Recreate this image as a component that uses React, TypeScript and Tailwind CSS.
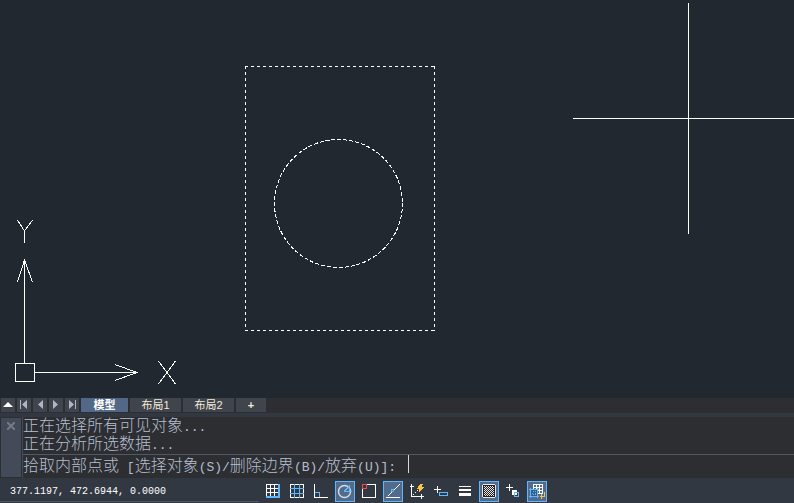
import { useState } from 'react';
import type { ReactNode } from 'react';
import clsx from 'clsx';

interface StatusToggle {
  id: string;
  label: string;
  icon: ReactNode;
}

const BLUE = '#5db8ff';

const statusToggles: StatusToggle[] = [
  {
    id: 'snap',
    label: '捕捉模式',
    icon: (
      <>
        <path d="M3 3.5h12M3 7.5h12M3 11.5h12M3.5 3v13M7.5 3v12M11.5 3v12" stroke="#fff" />
        <path d="M15 3h2v14H3v-2h12z" fill={BLUE} />
      </>
    ),
  },
  {
    id: 'grid',
    label: '栅格显示',
    icon: (
      <>
        <path d="M3.5 3.5h13v13h-13z" stroke="#fff" />
        <path d="M7.5 3v14M12.5 3v14M3 7.5h14M3 12.5h14" stroke={BLUE} />
      </>
    ),
  },
  {
    id: 'ortho',
    label: '正交模式',
    icon: (
      <>
        <path d="M4 11.5h4.5V16" stroke={BLUE} />
        <path d="M3.5 3v13.5H17" stroke="#fff" />
      </>
    ),
  },
  {
    id: 'polar',
    label: '极轴追踪',
    icon: (
      <>
        <circle cx="9.5" cy="10.5" r="6" stroke="#d8dde4" strokeWidth="1.4" shapeRendering="auto" />
        <path d="M9 10.5h8M9 10.5l6-6M14.5 6.5v4" stroke={BLUE} />
      </>
    ),
  },
  {
    id: 'osnap',
    label: '对象捕捉',
    icon: (
      <>
        <path d="M8 3.5h8.5v13h-13V8" stroke="#fff" />
        <path d="M3.5 3.5h4v4h-4z" stroke="#ef4b4b" />
      </>
    ),
  },
  {
    id: 'otrack',
    label: '对象捕捉追踪',
    icon: (
      <>
        <path d="M3 16.5h14M4.5 15.5l12-12" stroke="#fff" />
        <path d="M8.5 8.5h2v2h-2z" stroke={BLUE} fill="#56708f" />
      </>
    ),
  },
  {
    id: 'ducs',
    label: '动态 UCS',
    icon: (
      <>
        <path d="M4.5 3v12.5H17M3 5.5h4M14.5 13v5" stroke="#fff" />
        <path d="M5.5 14.5l6-6" stroke="#fff" strokeDasharray="2 1" />
        <path d="M13 3h3l-1 3h2l-5 5v-3h-2z" fill="#fdc342" />
      </>
    ),
  },
  {
    id: 'dyn',
    label: '动态输入',
    icon: (
      <>
        <path d="M3 8.5h7M6.5 5v7" stroke="#fff" />
        <path d="M8.5 11.5h8v3h-8z" stroke={BLUE} />
      </>
    ),
  },
  {
    id: 'lwt',
    label: '线宽',
    icon: <path d="M4 5h12v1H4zM4 8h12v2H4zM4 12h12v3H4z" fill="#fff" />,
  },
  {
    id: 'transparency',
    label: '透明度',
    icon: (
      <>
        <rect x="3.5" y="3.5" width="13" height="13" rx="2" stroke="#e8e8e8" fill="#222" />
        <path
          d="M5 5.5h10M6 6.5h9M5 7.5h10M6 8.5h9M5 9.5h10M6 10.5h9M5 11.5h10M6 12.5h9M5 13.5h10M6 14.5h9"
          stroke="#e8e8e8"
          strokeDasharray="1 1"
        />
      </>
    ),
  },
  {
    id: 'cycling',
    label: '选择循环',
    icon: (
      <>
        <path d="M3 6.5h7M6.5 3v7" stroke="#fff" />
        <path d="M9 9h5v5H9z" fill="#fff" />
        <path d="M11.5 11.5h4v4h-4z" stroke={BLUE} fill="#313842" />
        <path d="M12 12h2v2h-2z" fill="#fff" />
      </>
    ),
  },
  {
    id: 'viewport',
    label: '模型视口',
    icon: (
      <>
        <path d="M6.5 3.5h9v9h-9zM6 6.5h10M6 9.5h10M9.5 3v9M12.5 3v9" stroke="#fff" />
        <path d="M3 8h8v8H3z" fill="#365d86" />
        <path d="M3.5 8.5h7v7h-7zM2 8.5h10M2 15.5h10M3.5 7v10M10.5 7v10" stroke={BLUE} />
        <path d="M5.5 10.5h3v3h-3z" stroke={BLUE} strokeDasharray="1 1" />
        <path d="M17.5 11v4.5H13M14.5 13v5" stroke="#fdc342" />
      </>
    ),
  },
];

const layoutNav = [
  { label: '显示列表', path: 'M2 9l5-5 5 5z', color: 'text-white' },
  { label: '第一个', path: 'M3 2h1v9H3zM10 2v9L5 6.5z', color: 'text-[#aeb6c2]' },
  { label: '上一个', path: 'M10 2v9L5 6.5z', color: 'text-[#aeb6c2]' },
  { label: '下一个', path: 'M4 2v9l5-4.5z', color: 'text-[#aeb6c2]' },
  { label: '最后一个', path: 'M4 2v9l5-4.5zM10 2h1v9h-1z', color: 'text-[#aeb6c2]' },
];

const layoutTabs = [
  { name: '模型', width: 'w-[47px]' },
  { name: '布局1', width: 'w-[51px]' },
  { name: '布局2', width: 'w-[51px]' },
];

const history = [
  { text: '正在选择所有可见对象', tail: '...' },
  { text: '正在分析所选数据', tail: '...' },
];

function Latin({ children }: { children: ReactNode }) {
  return <span className="font-['Liberation_Mono',monospace] text-[13px]">{children}</span>;
}

function DrawingArea() {
  return (
    <main className="relative flex-1 bg-[#222830]">
      <svg className="absolute inset-0 h-full w-full" fill="none" stroke="#fff" shapeRendering="crispEdges">
        {/* Selected boundary */}
        <path d="M245 66.5h190M245 330.5h190M245.5 66v265M434.5 66v265" strokeDasharray="3 3" />
        <circle cx="338.5" cy="203.5" r="64" strokeDasharray="4 2" />

        {/* Crosshair */}
        <path d="M573 118.5H794M688.5 3v231" />

        {/* UCS icon */}
        <path d="M15.5 363.5h19v18h-19zM24.5 363V260M35 372.5h103" />
        <path d="M17.5 282l7-22 8 22M115 364.500l22 8-22 8" />
        <path d="M17.5 220l7 11 8-11M24.5 231v12M158.5 361l17 23M175.5 361l-17 23" />
      </svg>
    </main>
  );
}

export default function App() {
  const [activeTab, setActiveTab] = useState('模型');
  const [command, setCommand] = useState('');
  const [enabled, setEnabled] = useState<string[]>(['polar', 'otrack', 'transparency', 'viewport']);

  const toggle = (id: string) => {
    setEnabled(prev => (prev.includes(id) ? prev.filter(item => item !== id) : [...prev, id]));
  };

  return (
    <div className="flex min-h-screen flex-col bg-[#313842] font-['Liberation_Sans','Noto_Sans_CJK_SC',sans-serif]">
      <DrawingArea />

      {/* Layout tabs */}
      <nav className="flex h-[15px] gap-0.5 bg-[#2c2e32] px-px pb-px">
        {layoutNav.map(item => (
          <button
            key={item.label}
            aria-label={item.label}
            className={clsx('flex w-3.5 items-center justify-center bg-[#40444d]', item.color)}
          >
            <svg width="14" height="14" fill="currentColor">
              <path d={item.path} />
            </svg>
          </button>
        ))}
        {layoutTabs.map(tab => (
          <button
            key={tab.name}
            onClick={() => setActiveTab(tab.name)}
            className={clsx(
              'text-[11px] leading-[14px]',
              tab.width,
              activeTab === tab.name ? 'bg-[#526886] font-bold text-white' : 'bg-[#40444d] text-[#f3ead8]'
            )}
          >
            {tab.name}
          </button>
        ))}
        <button aria-label="新建布局" className="w-[30px] bg-[#40444d] text-[11px] font-bold leading-[14px] text-[#f3ead8]">
          +
        </button>
      </nav>

      {/* Command line */}
      <section className="mt-1 flex bg-[#2c2e32] text-base font-light text-[#b4bfcf]">
        <div className="my-px ml-px flex w-5 justify-center bg-[#434a59] pt-1">
          <button aria-label="关闭" className="h-2 w-2 text-[#747b85]">
            <svg width="8" height="8" stroke="currentColor" strokeWidth="2">
              <path d="M0 0l8 8M8 0L0 8" />
            </svg>
          </button>
        </div>
        <div className="ml-px flex-1 border-l border-[#434a59]">
          {history.map(line => (
            <p key={line.text} className="h-[18px] whitespace-nowrap leading-[18px]">
              {line.text}
              <Latin>{line.tail}</Latin>
            </p>
          ))}
          <div className="mt-px flex h-6 border-t border-[#505a66]">
            <label htmlFor="command" className="whitespace-pre leading-[22px]">
              拾取内部点或<Latin> [</Latin>选择对象<Latin>(S)/</Latin>删除边界<Latin>(B)/</Latin>放弃<Latin>(U)]: </Latin>
            </label>
            <input
              id="command"
              value={command}
              onChange={e => setCommand(e.target.value)}
              className="ml-1 h-[18px] flex-1 border-l border-[#d5d8dc] outline-none"
            />
          </div>
        </div>
      </section>

      {/* Status bar */}
      <footer className="flex h-[25px] items-start">
        <div className="flex h-6 w-[259px] items-center border-b border-[#505761] pl-2.5 pt-1 font-['Liberation_Mono',monospace] text-[10px] text-white">
          377.1197, 472.6944, 0.0000
        </div>
        <div className="flex gap-1 pl-1 pt-[3px]">
          {statusToggles.map(item => (
            <button
              key={item.id}
              aria-label={item.label}
              aria-pressed={enabled.includes(item.id)}
              onClick={() => toggle(item.id)}
              className={clsx(
                'h-[21px] w-5',
                enabled.includes(item.id) && 'bg-[#526b8a] outline outline-1 -outline-offset-1 outline-[#5db8ff]'
              )}
            >
              <svg width="20" height="21" fill="none" shapeRendering="crispEdges">
                {item.icon}
              </svg>
            </button>
          ))}
        </div>
      </footer>
    </div>
  );
}
